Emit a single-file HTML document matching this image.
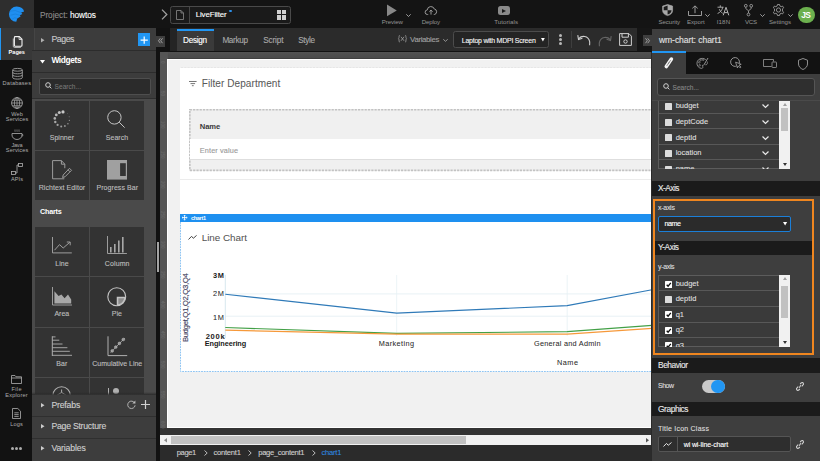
<!DOCTYPE html>
<html><head><meta charset="utf-8">
<style>
*{box-sizing:border-box;margin:0;padding:0}
html,body{width:820px;height:461px;overflow:hidden;background:#141414;font-family:"Liberation Sans",sans-serif;position:relative}
.a{position:absolute}
.t{position:absolute;white-space:nowrap;line-height:1;-webkit-text-stroke:0.12px currentColor}
svg{position:absolute;overflow:visible}
</style></head><body>
<div class="a" style="left:0px;top:0px;width:820px;height:28.8px;background:#141414;"></div>
<div class="a" style="left:0px;top:0px;width:33.5px;height:28.4px;background:#2e2e2e;"></div>
<svg style="left:0px;top:0px" width="33" height="28" viewBox="0 0 33 28">
<path d="M16.8 6.6A7.6 7.6 0 0 0 16.3 21.8L17.2 18.5 20.6 16.6 19.9 15.3 22.4 14 21.1 12.6 24.1 11.5Q23.2 7 16.8 6.6Z" fill="#1f8ff0"/>
<path d="M10.0 11.2Q15 9.2 21.1 12.6M10.6 15.2Q15.2 12.8 19.9 15.3M12.2 19Q15 16.6 17.2 18.5" stroke="#1476cc" stroke-width="0.8" fill="none" opacity="0.6"/></svg>
<div class="t" style="left:39.90px;top:10.60px;font-size:8.3px;color:#8c8c8c;letter-spacing:-0.046px;">Project: <span style="color:#fff">howtos</span></div>
<svg style="left:161px;top:9px" width="7" height="11" viewBox="0 0 7 11"><path d="M1 0.6L5.8 5.5 1 10.4" stroke="#a0a0a0" stroke-width="1.3" fill="none"/></svg>
<div class="a" style="left:170.1px;top:6px;width:120.7px;height:17.8px;background:#1a1a1a;border:1px solid #4a4a4a;border-radius:2.5px"></div>
<div class="a" style="left:189.3px;top:6.5px;width:0.9px;height:16.8px;background:#474747;"></div>
<svg style="left:175.5px;top:10.3px" width="8" height="10" viewBox="0 0 8 10"><path d="M0.5 0.5H5L7.5 3V9.5H0.5Z M5 0.5V3H7.5" stroke="#8c8c8c" stroke-width="0.8" fill="none"/></svg>
<div class="t" style="left:195.70px;top:11.40px;font-size:7.9px;color:#fff;letter-spacing:-0.105px;">LiveFilter</div>
<div class="a" style="left:229.2px;top:9.8px;width:2.4px;height:2.4px;background:#2d8fe8;border-radius:50%"></div>
<div class="a" style="left:276.6px;top:10px;width:4.4px;height:4.4px;background:#cfcfcf;"></div>
<div class="a" style="left:281.8px;top:10px;width:4.4px;height:4.4px;background:#cfcfcf;"></div>
<div class="a" style="left:276.6px;top:15.2px;width:4.4px;height:4.4px;background:#cfcfcf;"></div>
<div class="a" style="left:281.8px;top:15.2px;width:4.4px;height:4.4px;background:#cfcfcf;"></div>
<svg style="left:386.6px;top:4.3px" width="9.8" height="12.4" viewBox="0 0 9.8 12.4"><path d="M0 0.6L9.8 6.5 0 12.2Z" fill="#888"/></svg>
<div class="t" style="left:381.70px;top:18.80px;font-size:6.1px;color:#949494;-webkit-text-stroke:0;letter-spacing:-0.066px;">Preview</div>
<svg style="left:406px;top:14.2px" width="5" height="3" viewBox="0 0 5 3"><path d="M0.3 0.3L2.5 2.5 4.7 0.3" stroke="#bdbdbd" stroke-width="0.8" fill="none"/></svg>
<svg style="left:425px;top:5px" width="12" height="10" viewBox="0 0 12 10"><path d="M3.2 9.5H2.6A2.3 2.3 0 0 1 2.3 4.9 3.6 3.6 0 0 1 9.3 4 2.8 2.8 0 0 1 9.4 9.5H8.8M6 9.6V5.2M4.4 6.7L6 5.1 7.6 6.7" stroke="#a8a8a8" stroke-width="0.9" fill="none"/></svg>
<div class="t" style="left:421.70px;top:18.80px;font-size:6.1px;color:#949494;-webkit-text-stroke:0;letter-spacing:-0.138px;">Deploy</div>
<div class="a" style="left:497.5px;top:6px;width:12.5px;height:9px;background:#8a8a8a;border-radius:2.5px"></div>
<svg style="left:502px;top:8.5px" width="4" height="4" viewBox="0 0 4 4"><path d="M0 0L4 2 0 4Z" fill="#1a1a1a"/></svg>
<div class="t" style="left:494.20px;top:18.80px;font-size:6.1px;color:#949494;-webkit-text-stroke:0;letter-spacing:0.079px;">Tutorials</div>
<svg style="left:662.3px;top:4.4px" width="11.2" height="12" viewBox="0 0 11.2 12"><path d="M5.6 0.5L10.6 2.1V6.5C10.6 9.1 8.4 10.9 5.6 11.6 2.8 10.9 0.6 9.1 0.6 6.5V2.1Z" fill="#a8a8a8" stroke="#b0b0b0" stroke-width="0.6"/><path d="M5.6 1.6V6.2H1.7V2.9Z M5.6 6.2H9.5V6.6C9.4 8.6 7.8 10 5.6 10.6Z" fill="#1c1c1c"/></svg>
<div class="t" style="left:658.40px;top:18.80px;font-size:6.1px;color:#949494;-webkit-text-stroke:0;letter-spacing:-0.034px;">Security</div>
<svg style="left:688px;top:5px" width="14" height="11" viewBox="0 0 14 11"><path d="M0.5 6V10.5H13.5V6M7 8.2V0.9M4.3 3.4L7 0.9 9.7 3.4" stroke="#a8a8a8" stroke-width="0.9" fill="none"/></svg>
<div class="t" style="left:687.00px;top:18.80px;font-size:6.1px;color:#949494;-webkit-text-stroke:0;">Export</div>
<svg style="left:705px;top:14.2px" width="5" height="3" viewBox="0 0 5 3"><path d="M0.3 0.3L2.5 2.5 4.7 0.3" stroke="#bdbdbd" stroke-width="0.8" fill="none"/></svg>
<svg style="left:717px;top:5px" width="13" height="10.5" viewBox="0 0 13 10.5"><path d="M0.5 2.2H6.5M3.3 0.3V2.2M5.8 2.2C5 5.5 3 7.5 0.6 8.5M2.3 4.2C3 6 4.3 7.5 5.6 8.3" stroke="#b4b4b4" stroke-width="0.9" fill="none"/><path d="M6.2 10.3L9 2.3 11.8 10.3M7.2 7.6H10.8" stroke="#b4b4b4" stroke-width="1" fill="none"/></svg>
<div class="t" style="left:716.70px;top:18.80px;font-size:6.1px;color:#949494;-webkit-text-stroke:0;letter-spacing:0.172px;">I18N</div>
<svg style="left:744.2px;top:4px" width="9" height="12.5" viewBox="0 0 9 12.5"><circle cx="1.8" cy="1.8" r="1.4" stroke="#aaa" stroke-width="0.8" fill="none"/><circle cx="7.2" cy="1.8" r="1.4" stroke="#aaa" stroke-width="0.8" fill="none"/><circle cx="4.5" cy="10.5" r="1.4" stroke="#aaa" stroke-width="0.8" fill="none"/><path d="M1.8 3.2V4.6L4.5 6.8V9.1M7.2 3.2V4.6L4.5 6.8" stroke="#aaa" stroke-width="0.8" fill="none"/></svg>
<div class="t" style="left:745.00px;top:18.80px;font-size:6.1px;color:#949494;-webkit-text-stroke:0;letter-spacing:-0.272px;">VCS</div>
<svg style="left:760px;top:14.2px" width="5" height="3" viewBox="0 0 5 3"><path d="M0.3 0.3L2.5 2.5 4.7 0.3" stroke="#bdbdbd" stroke-width="0.8" fill="none"/></svg>
<svg style="left:772.3px;top:4px" width="13" height="12" viewBox="0 0 13 12"><circle cx="6.5" cy="6" r="2.1" stroke="#aaa" stroke-width="0.8" fill="none"/><path d="M5.5 0.5H7.5L7.9 2 9.2 2.7 10.6 2.1 11.6 3.8 10.5 4.9V7.1L11.6 8.2 10.6 9.9 9.2 9.3 7.9 10 7.5 11.5H5.5L5.1 10 3.8 9.3 2.4 9.9 1.4 8.2 2.5 7.1V4.9L1.4 3.8 2.4 2.1 3.8 2.7 5.1 2Z" stroke="#aaa" stroke-width="0.8" fill="none"/></svg>
<div class="t" style="left:769.00px;top:18.80px;font-size:6.1px;color:#949494;-webkit-text-stroke:0;">Settings</div>
<svg style="left:788.3px;top:14.2px" width="5" height="3" viewBox="0 0 5 3"><path d="M0.3 0.3L2.5 2.5 4.7 0.3" stroke="#bdbdbd" stroke-width="0.8" fill="none"/></svg>
<div class="a" style="left:798.1px;top:6.9px;width:16.6px;height:16.6px;background:#6cb04e;border-radius:50%"></div>
<div class="t" style="left:801.30px;top:11.10px;font-size:8.4px;color:#fff;font-weight:bold;-webkit-text-stroke:0;letter-spacing:-0.675px;">JS</div>
<div class="a" style="left:32px;top:28.4px;width:124px;height:433px;background:#3c3c3c;"></div>
<div class="a" style="left:32px;top:99.4px;width:124px;height:296px;background:#4a4a4a;"></div>
<div class="a" style="left:0px;top:28.4px;width:32px;height:433px;background:#121212;"></div>
<div class="a" style="left:0px;top:28.4px;width:33.6px;height:31.9px;background:#383838;"></div>
<div class="a" style="left:33.6px;top:28.4px;width:0.8px;height:31.9px;background:#454545;"></div>
<div class="a" style="left:0px;top:28.4px;width:1.3px;height:31.9px;background:#2196f3;"></div>
<svg style="left:11.5px;top:36px" width="11" height="12" viewBox="0 0 11 12"><path d="M1.3 2.5V10.3C1.3 11 1.8 11.4 2.5 11.4H8.8" stroke="#cfcfcf" stroke-width="0.9" fill="none"/><path d="M3.2 0.6H7.3L10 3.3V9.2C10 9.8 9.6 10.2 9 10.2H3.2C2.6 10.2 2.4 9.8 2.4 9.2V1.4C2.4 0.9 2.7 0.6 3.2 0.6Z" stroke="#f0f0f0" stroke-width="1.1" fill="none"/><path d="M7.1 0.8V3.5H9.8" stroke="#f0f0f0" stroke-width="0.8" fill="none"/></svg>
<div class="t" style="left:8.60px;top:50.30px;font-size:5.6px;color:#fff;font-weight:bold;-webkit-text-stroke:0;letter-spacing:-0.025px;">Pages</div>
<svg style="left:12px;top:67.8px" width="11" height="11.5" viewBox="0 0 11 11.5"><ellipse cx="5.5" cy="1.8" rx="4.8" ry="1.4" stroke="#b0b0b0" stroke-width="0.8" fill="none"/><path d="M0.7 1.8V9.7C0.7 10.5 3 11.1 5.5 11.1 8 11.1 10.3 10.5 10.3 9.7V1.8M0.7 4.4C0.7 5.2 3 5.8 5.5 5.8 8 5.8 10.3 5.2 10.3 4.4M0.7 7C0.7 7.8 3 8.4 5.5 8.4 8 8.4 10.3 7.8 10.3 7" stroke="#b0b0b0" stroke-width="0.8" fill="none"/></svg>
<div class="t" style="left:2.60px;top:81.20px;font-size:5.6px;color:#acacac;-webkit-text-stroke:0;letter-spacing:0.203px;">Databases</div>
<svg style="left:11px;top:97px" width="12" height="12" viewBox="0 0 12 12"><circle cx="6" cy="6" r="5.4" stroke="#b0b0b0" stroke-width="0.8" fill="none"/><ellipse cx="6" cy="6" rx="2.6" ry="5.4" stroke="#b0b0b0" stroke-width="0.7" fill="none"/><path d="M0.6 6H11.4M1.4 3.2H10.6M1.4 8.8H10.6M6 0.6V11.4" stroke="#b0b0b0" stroke-width="0.7" fill="none"/></svg>
<div class="t" style="left:11.25px;top:111.80px;font-size:5.6px;color:#acacac;-webkit-text-stroke:0;letter-spacing:0.043px;">Web</div>
<div class="t" style="left:5.75px;top:117.20px;font-size:5.6px;color:#acacac;-webkit-text-stroke:0;letter-spacing:0.147px;">Services</div>
<svg style="left:10.5px;top:128.8px" width="12" height="11" viewBox="0 0 12 11"><path d="M4 0.5C3.5 1.2 4.5 1.8 4 2.8M6 0.5C5.5 1.2 6.5 1.8 6 2.8M8 0.5C7.5 1.2 8.5 1.8 8 2.8" stroke="#b0b0b0" stroke-width="0.6" fill="none"/><path d="M1 4.5H11V6C11 8.5 8.8 10.5 6 10.5 3.2 10.5 1 8.5 1 6Z" stroke="#b0b0b0" stroke-width="0.8" fill="none"/><path d="M11 5.5H11.8V7H10.8" stroke="#b0b0b0" stroke-width="0.6" fill="none"/></svg>
<div class="t" style="left:11.50px;top:142.80px;font-size:5.6px;color:#acacac;-webkit-text-stroke:0;letter-spacing:-0.276px;">Java</div>
<div class="t" style="left:5.75px;top:148.40px;font-size:5.6px;color:#acacac;-webkit-text-stroke:0;letter-spacing:0.147px;">Services</div>
<svg style="left:11px;top:163px" width="12" height="12" viewBox="0 0 12 12"><rect x="7.5" y="0.5" width="4" height="3" stroke="#b0b0b0" stroke-width="0.8" fill="none"/><rect x="0.5" y="8.5" width="4" height="3" stroke="#b0b0b0" stroke-width="0.8" fill="none"/><path d="M4.5 10H6V2H7.5" stroke="#b0b0b0" stroke-width="0.8" fill="none"/></svg>
<div class="t" style="left:11.00px;top:177.30px;font-size:5.6px;color:#acacac;-webkit-text-stroke:0;letter-spacing:0.058px;">APIs</div>
<svg style="left:11px;top:375px" width="11" height="9" viewBox="0 0 11 9"><path d="M0.5 0.5H4L5 1.8H10.5V8.5H0.5Z M0.5 3H10.5" stroke="#b0b0b0" stroke-width="0.8" fill="none"/></svg>
<div class="t" style="left:11.50px;top:386.50px;font-size:5.6px;color:#acacac;-webkit-text-stroke:0;letter-spacing:0.325px;">File</div>
<div class="t" style="left:5.25px;top:392.50px;font-size:5.6px;color:#acacac;-webkit-text-stroke:0;letter-spacing:0.235px;">Explorer</div>
<svg style="left:12px;top:407.5px" width="9" height="11" viewBox="0 0 9 11"><path d="M0.5 0.5H5.8L8.5 3.2V10.5H0.5Z M2.3 4.8H6.7M2.3 6.6H6.7M2.3 8.4H6.7" stroke="#b0b0b0" stroke-width="0.8" fill="none"/></svg>
<div class="t" style="left:10.25px;top:421.50px;font-size:5.6px;color:#acacac;-webkit-text-stroke:0;letter-spacing:0.119px;">Logs</div>
<div class="a" style="left:11px;top:446.5px;width:3px;height:3px;background:#acacac;border-radius:50%"></div>
<div class="a" style="left:15.2px;top:446.5px;width:3px;height:3px;background:#acacac;border-radius:50%"></div>
<div class="a" style="left:19.4px;top:446.5px;width:3px;height:3px;background:#acacac;border-radius:50%"></div>
<div class="a" style="left:32px;top:50.0px;width:124px;height:1.0px;background:#2c2c2c;"></div>
<svg style="left:41px;top:37.5px" width="3.5" height="4.5" viewBox="0 0 3.5 4.5"><path d="M0 0L3.5 2.25 0 4.5Z" fill="#b0b0b0"/></svg>
<div class="t" style="left:51.40px;top:34.70px;font-size:8.8px;color:#c8c8c8;letter-spacing:-0.463px;">Pages</div>
<div class="a" style="left:137.5px;top:33.4px;width:12.6px;height:12.6px;background:#2196f3;"></div>
<svg style="left:139.6px;top:35.5px" width="8.4" height="8.4" viewBox="0 0 8.4 8.4"><path d="M4.2 0.6V7.8M0.6 4.2H7.8" stroke="#fff" stroke-width="1.2"/></svg>
<div class="a" style="left:32px;top:51px;width:124px;height:21.6px;background:#3c3c3c;"></div>
<div class="a" style="left:32px;top:72.4px;width:124px;height:1.0px;background:#2c2c2c;"></div>
<svg style="left:40px;top:59.5px" width="5" height="3.6" viewBox="0 0 5 3.6"><path d="M0 0H5L2.5 3.6Z" fill="#fff"/></svg>
<div class="t" style="left:51.40px;top:55.60px;font-size:8.4px;color:#fff;font-weight:bold;-webkit-text-stroke:0;letter-spacing:-0.365px;">Widgets</div>
<div class="a" style="left:32px;top:73.4px;width:124px;height:25.2px;background:#3c3c3c;"></div>
<div class="a" style="left:32px;top:98.4px;width:124px;height:1.0px;background:#2e2e2e;"></div>
<div class="a" style="left:39px;top:77.8px;width:112px;height:16.9px;background:#2b2b2b;border:1px solid #4e4e4e;border-radius:2px"></div>
<svg style="left:44.5px;top:82.3px" width="7" height="7" viewBox="0 0 7 7"><circle cx="3" cy="3" r="2.3" stroke="#d0d0d0" stroke-width="1" fill="none"/><path d="M4.7 4.7L6.4 6.4" stroke="#d0d0d0" stroke-width="1"/></svg>
<div class="t" style="left:54.60px;top:83.80px;font-size:6.6px;color:#7a7a7a;-webkit-text-stroke:0.05px currentColor;">Search...</div>
<div class="a" style="left:34.8px;top:100.9px;width:54.4px;height:48.900000000000006px;background:#333;"></div>
<div class="a" style="left:90.0px;top:100.9px;width:53.9px;height:48.900000000000006px;background:#333;"></div>
<div class="a" style="left:34.8px;top:150.6px;width:54.4px;height:49.099999999999994px;background:#333;"></div>
<div class="a" style="left:90.0px;top:150.6px;width:53.9px;height:49.099999999999994px;background:#333;"></div>
<div class="a" style="left:34.8px;top:226.8px;width:54.4px;height:49.30000000000001px;background:#333;"></div>
<div class="a" style="left:90.0px;top:226.8px;width:53.9px;height:49.30000000000001px;background:#333;"></div>
<div class="a" style="left:34.8px;top:276.9px;width:54.4px;height:49.900000000000034px;background:#333;"></div>
<div class="a" style="left:90.0px;top:276.9px;width:53.9px;height:49.900000000000034px;background:#333;"></div>
<div class="a" style="left:34.8px;top:327.6px;width:54.4px;height:49.599999999999966px;background:#333;"></div>
<div class="a" style="left:90.0px;top:327.6px;width:53.9px;height:49.599999999999966px;background:#333;"></div>
<div class="a" style="left:34.8px;top:378px;width:54.4px;height:16px;background:#333;"></div>
<div class="a" style="left:90.0px;top:378px;width:53.9px;height:16px;background:#333;"></div>
<div class="t" style="left:40.10px;top:208.20px;font-size:7.2px;color:#fff;font-weight:bold;-webkit-text-stroke:0;letter-spacing:-0.221px;">Charts</div>
<svg style="left:53px;top:109.5px" width="19" height="19" viewBox="0 0 19 19"><circle cx="10" cy="1.9" r="1.6" fill="#c8c8c8"/><circle cx="6.3" cy="2.5" r="1.5" fill="#c0c0c0"/><circle cx="3.3" cy="4.9" r="1.4" fill="#b8b8b8"/><circle cx="1.8" cy="8.4" r="1.3" fill="#b0b0b0"/><circle cx="2.3" cy="12" r="1.2" fill="#a8a8a8"/><circle cx="4.6" cy="14.9" r="1.1" fill="#a2a2a2"/><circle cx="8.2" cy="16.4" r="1" fill="#9c9c9c"/><circle cx="11.9" cy="16" r="0.9" fill="#969696"/><circle cx="14.9" cy="13.8" r="0.8" fill="#909090"/><circle cx="16.4" cy="10.4" r="0.65" fill="#8a8a8a"/><circle cx="16.2" cy="6.7" r="0.5" fill="#848484"/><circle cx="14.5" cy="3.7" r="0.4" fill="#7e7e7e"/></svg>
<div class="t" style="left:49.70px;top:133.90px;font-size:7px;color:#bdbdbd;letter-spacing:0.029px;">Spinner</div>
<svg style="left:107px;top:109.8px" width="20" height="20" viewBox="0 0 20 20"><circle cx="7.4" cy="7.4" r="6.7" stroke="#c4c4c4" stroke-width="1" fill="none"/><path d="M12.2 12.2L17.6 17.6" stroke="#c4c4c4" stroke-width="1"/></svg>
<div class="t" style="left:105.70px;top:133.90px;font-size:7px;color:#bdbdbd;letter-spacing:0.064px;">Search</div>
<svg style="left:51.7px;top:160.3px" width="21" height="20" viewBox="0 0 21 20"><path d="M12.3 18.8H0.6V0.6H9.4L12.8 4.2V8.2M9.4 0.6V4.2H12.8" stroke="#a8a8a8" stroke-width="0.9" fill="none"/><path d="M17.5 8.3L19.5 10.3 13 16.8 10.6 17.5 11.2 15Z M16 9.8L18 11.8" stroke="#a8a8a8" stroke-width="0.9" fill="none"/></svg>
<div class="t" style="left:38.70px;top:183.90px;font-size:7px;color:#bdbdbd;letter-spacing:0.070px;">Richtext Editor</div>
<svg style="left:107.1px;top:160px" width="20" height="19.6" viewBox="0 0 20 19.6"><rect x="0" y="0" width="20" height="19.6" fill="#a0a0a0"/><rect x="13.1" y="3.2" width="5.7" height="12.8" fill="#333"/></svg>
<div class="t" style="left:96.50px;top:183.90px;font-size:7px;color:#bdbdbd;letter-spacing:0.059px;">Progress Bar</div>
<svg style="left:51.5px;top:237px" width="20" height="16.5" viewBox="0 0 20 16.5"><path d="M0.5 0V15.9H19.8" stroke="#a8a8a8" stroke-width="0.9" fill="none"/><path d="M2.5 13.2L7.5 7.6 11.2 11 17.8 5.3M14.8 5H18.2V8.3" stroke="#a8a8a8" stroke-width="0.9" fill="none"/></svg>
<div class="t" style="left:55.20px;top:260.10px;font-size:7px;color:#bdbdbd;letter-spacing:0.088px;">Line</div>
<svg style="left:107px;top:236px" width="20" height="18" viewBox="0 0 20 18"><path d="M0.5 0V17.5H19.9" stroke="#a8a8a8" stroke-width="0.9" fill="none"/><path d="M3.8 16.5V11M7.8 16.5V8M11.8 16.5V4.5M15.8 16.5V1" stroke="#a8a8a8" stroke-width="1.6"/></svg>
<div class="t" style="left:104.80px;top:260.10px;font-size:7px;color:#bdbdbd;letter-spacing:0.116px;">Column</div>
<svg style="left:51.7px;top:287px" width="20" height="18.5" viewBox="0 0 20 18.5"><path d="M0.5 0V18H20" stroke="#a8a8a8" stroke-width="0.9" fill="none"/><path d="M2.4 16.5V4.2L6.6 9 9.4 7.4 12.6 11.2 16 7.4 19.2 12.5V16.5Z" fill="#a8a8a8"/></svg>
<div class="t" style="left:54.40px;top:310.00px;font-size:7px;color:#bdbdbd;">Area</div>
<svg style="left:107.2px;top:286.8px" width="19.5" height="19.5" viewBox="0 0 19.5 19.5"><path d="M18.7 9.75A8.95 8.95 0 1 1 9.75 0.8 8.95 8.95 0 0 1 18.7 9.75Z" stroke="#c4c4c4" stroke-width="1.1" fill="none"/><path d="M9.75 9.75V18.7A8.95 8.95 0 0 0 18.7 9.75Z" fill="#c4c4c4"/><path d="M11.3 11.3H17.2A7.4 7.4 0 0 1 11.3 17.2Z" fill="#8c8c8c"/></svg>
<div class="t" style="left:111.70px;top:310.00px;font-size:7px;color:#bdbdbd;letter-spacing:0.041px;">Pie</div>
<svg style="left:0px;top:0px" width="160" height="461" viewBox="0 0 160 461"><path d="M52.3 336.3V356" stroke="#b0b0b0" stroke-width="1" fill="none"/><path d="M52.3 336.9H55.5M52.3 340.2H59.3M52.3 344H62.5M52.3 347.7H67.4M52.3 351.3H69.8M52.3 355.3H72" stroke="#b0b0b0" stroke-width="0.9"/></svg>
<div class="t" style="left:56.30px;top:360.00px;font-size:7px;color:#bdbdbd;letter-spacing:0.053px;">Bar</div>
<svg style="left:0px;top:0px" width="160" height="461" viewBox="0 0 160 461"><path d="M108 336.3V355.6H127.2" stroke="#b0b0b0" stroke-width="1" fill="none"/><path d="M110.6 352.6L124.8 338" stroke="#a0a0a0" stroke-width="0.9"/><circle cx="112.2" cy="350.9" r="1.35" fill="#9a9a9a" stroke="#c4c4c4" stroke-width="0.5"/><circle cx="115.8" cy="347.1" r="1.35" fill="#9a9a9a" stroke="#c4c4c4" stroke-width="0.5"/><circle cx="119.4" cy="343.4" r="1.35" fill="#9a9a9a" stroke="#c4c4c4" stroke-width="0.5"/><circle cx="123.3" cy="339.5" r="1.35" fill="#9a9a9a" stroke="#c4c4c4" stroke-width="0.5"/></svg>
<div class="t" style="left:92.30px;top:360.00px;font-size:7px;color:#bdbdbd;letter-spacing:-0.021px;">Cumulative Line</div>
<svg style="left:0px;top:0px" width="160" height="461" viewBox="0 0 160 461"><path d="M52.8 395.5A8.8 8.8 0 0 1 70.4 395.5" stroke="#b0b0b0" stroke-width="1.1" fill="none"/><path d="M61.6 389.5V392.5M61.6 392.5L56.5 395.5M61.6 392.5L66.7 395.5" stroke="#b0b0b0" stroke-width="1" fill="none"/></svg>
<div class="a" style="left:107.9px;top:388.0px;width:1.0px;height:6.5px;background:#b0b0b0;"></div>
<div class="a" style="left:112.6px;top:387.6px;width:6.8px;height:6.8px;background:#b0b0b0;border-radius:50%"></div>
<div class="a" style="left:32px;top:391.5px;width:124px;height:3.7px;background:linear-gradient(rgba(40,40,40,0),rgba(40,40,40,0.9));"></div>
<div class="a" style="left:32px;top:395.2px;width:124px;height:66px;background:#3d3d3d;"></div>
<div class="a" style="left:32px;top:416.0px;width:124px;height:0.9px;background:#2f2f2f;"></div>
<div class="a" style="left:32px;top:438.0px;width:124px;height:0.9px;background:#2f2f2f;"></div>
<svg style="left:41.2px;top:403.2px" width="3.5" height="4.5" viewBox="0 0 3.5 4.5"><path d="M0 0L3.5 2.25 0 4.5Z" fill="#ccc"/></svg>
<div class="t" style="left:51.40px;top:400.70px;font-size:8.7px;color:#cfcfcf;letter-spacing:-0.181px;">Prefabs</div>
<svg style="left:127px;top:400.2px" width="9" height="9" viewBox="0 0 9 9"><path d="M7.7 3.1A3.7 3.7 0 1 0 8.1 5.3" stroke="#bdbdbd" stroke-width="0.9" fill="none"/><path d="M8.4 0.5V3.6H5.3Z" fill="#bdbdbd"/></svg>
<svg style="left:141.2px;top:400.2px" width="9" height="9" viewBox="0 0 9 9"><path d="M4.5 0V9M0 4.5H9" stroke="#d0d0d0" stroke-width="1.2"/></svg>
<svg style="left:41.2px;top:424.4px" width="3.5" height="4.5" viewBox="0 0 3.5 4.5"><path d="M0 0L3.5 2.25 0 4.5Z" fill="#ccc"/></svg>
<div class="t" style="left:51.40px;top:422.20px;font-size:8.7px;color:#cfcfcf;letter-spacing:-0.241px;">Page Structure</div>
<svg style="left:41.2px;top:445.8px" width="3.5" height="4.5" viewBox="0 0 3.5 4.5"><path d="M0 0L3.5 2.25 0 4.5Z" fill="#ccc"/></svg>
<div class="t" style="left:51.40px;top:443.60px;font-size:8.7px;color:#cfcfcf;letter-spacing:-0.153px;">Variables</div>
<div class="a" style="left:156px;top:28.4px;width:496px;height:433px;background:#121212;"></div>
<div class="a" style="left:155.9px;top:35.5px;width:9px;height:11.1px;background:#3e3e3e;"></div>
<svg style="left:158px;top:38.2px" width="5" height="5.5" viewBox="0 0 5 5.5"><path d="M2.3 0.3L0.5 2.75 2.3 5.2M4.5 0.3L2.7 2.75 4.5 5.2" stroke="#b8b8b8" stroke-width="0.8" fill="none"/></svg>
<div class="a" style="left:170px;top:28.4px;width:6.5px;height:22.4px;background:#242424;"></div>
<div class="a" style="left:176.5px;top:28.4px;width:460.7px;height:22.4px;background:#2b2b2b;"></div>
<div class="a" style="left:176.8px;top:28.6px;width:36.8px;height:22.2px;background:#3a3a3a;"></div>
<div class="a" style="left:176.8px;top:28.7px;width:36.8px;height:2.0px;background:#2196f3;"></div>
<div class="t" style="left:183.10px;top:36.90px;font-size:8.2px;color:#fff;letter-spacing:-0.305px;">Design</div>
<div class="t" style="left:222.40px;top:36.90px;font-size:8.2px;color:#a8a8a8;letter-spacing:-0.349px;">Markup</div>
<div class="t" style="left:263.20px;top:36.90px;font-size:8.2px;color:#a8a8a8;letter-spacing:-0.132px;">Script</div>
<div class="t" style="left:298.20px;top:36.90px;font-size:8.2px;color:#a8a8a8;letter-spacing:-0.358px;">Style</div>
<svg style="left:398.4px;top:35.3px" width="9" height="7.5" viewBox="0 0 9 7.5"><path d="M1.8 0.3C0.8 0.3 1.2 2.5 0.9 3.2 0.7 3.6 0.3 3.75 0.3 3.75 0.3 3.75 0.7 3.9 0.9 4.3 1.2 5 0.8 7.2 1.8 7.2M7.2 0.3C8.2 0.3 7.8 2.5 8.1 3.2 8.3 3.6 8.7 3.75 8.7 3.75 8.7 3.75 8.3 3.9 8.1 4.3 7.8 5 8.2 7.2 7.2 7.2M3 1.8L6 5.8M6 1.8L3 5.8" stroke="#a0a0a0" stroke-width="0.8" fill="none"/></svg>
<div class="t" style="left:410.10px;top:35.90px;font-size:7.8px;color:#a0a0a0;letter-spacing:-0.330px;">Variables</div>
<svg style="left:442.8px;top:38.6px" width="5" height="2.8" viewBox="0 0 5 2.8"><path d="M0.3 0.3L2.5 2.3 4.7 0.3" stroke="#b0b0b0" stroke-width="0.8" fill="none"/></svg>
<div class="a" style="left:452.6px;top:31.2px;width:96.1px;height:17.3px;background:#242424;border:1px solid #4c4c4c;border-radius:2.5px"></div>
<div class="t" style="left:461.80px;top:36.60px;font-size:7.0px;color:#f4f4f4;letter-spacing:-0.244px;">Laptop with MDPI Screen</div>
<svg style="left:541px;top:38.4px" width="3.8" height="3.4" viewBox="0 0 3.8 3.4"><path d="M0 0H3.8L1.9 3.4Z" fill="#fff"/></svg>
<div class="a" style="left:558.6px;top:33.9px;width:3.1px;height:3.1px;background:#b8b8b8;border-radius:50%"></div>
<div class="a" style="left:558.6px;top:38.0px;width:3.1px;height:3.1px;background:#b8b8b8;border-radius:50%"></div>
<div class="a" style="left:558.6px;top:42.1px;width:3.1px;height:3.1px;background:#b8b8b8;border-radius:50%"></div>
<div class="a" style="left:571.2px;top:31px;width:0.9px;height:17.3px;background:#3e3e3e;"></div>
<svg style="left:577px;top:34.0px" width="14" height="12" viewBox="0 0 14 12"><path d="M1.8 4.6C4.5 1.4 11.2 1.2 12.6 7.4 12.9 8.8 12.6 10.3 12.6 11.3" stroke="#cfcfcf" stroke-width="1.1" fill="none"/><path d="M0.8 1.2L1.5 5.6 5.4 4.3" stroke="#cfcfcf" stroke-width="1.1" fill="none"/></svg>
<svg style="left:597.5px;top:34.5px" width="14" height="12" viewBox="0 0 14 12"><path d="M12.2 4.6C9.5 1.4 2.8 1.2 1.4 7.4 1.1 8.8 1.4 10.3 1.4 11.3" stroke="#666" stroke-width="1.1" fill="none"/><path d="M13.2 1.2L12.5 5.6 8.6 4.3" stroke="#666" stroke-width="1.1" fill="none"/></svg>
<svg style="left:619.3px;top:33.3px" width="13" height="13" viewBox="0 0 13 13"><path d="M0.6 0.6H9.9L12.4 3.1V12.4H0.6Z" stroke="#cfcfcf" stroke-width="1" fill="none"/><path d="M3 0.6V4.2H9.4V0.6" stroke="#cfcfcf" stroke-width="1" fill="none"/><circle cx="6.5" cy="8.5" r="1.7" stroke="#cfcfcf" stroke-width="1" fill="none"/></svg>
<div class="a" style="left:637.2px;top:28.4px;width:14.8px;height:22.4px;background:#161616;"></div>
<div class="a" style="left:643px;top:35.3px;width:9px;height:10.4px;background:#3e3e3e;"></div>
<svg style="left:645.3px;top:37.5px" width="5" height="5.5" viewBox="0 0 5 5.5"><path d="M0.5 0.3L2.3 2.75 0.5 5.2M2.7 0.3L4.5 2.75 2.7 5.2" stroke="#b8b8b8" stroke-width="0.8" fill="none"/></svg>
<div class="a" style="left:156px;top:50.6px;width:496px;height:1.4px;background:#121212;"></div>
<div class="a" style="left:156.9px;top:241.8px;width:2.3px;height:30.2px;background:#a4a4a4;"></div>
<div class="a" style="left:160px;top:52.0px;width:491.4px;height:375.7px;background:#555555;"></div>
<div class="a" style="left:167.5px;top:52.0px;width:484px;height:6.4px;background:linear-gradient(#525252,#4a4a4a);"></div>
<div class="a" style="left:167.5px;top:57.8px;width:484px;height:1.0px;background:#404040;"></div>
<div class="a" style="left:166.6px;top:59.8px;width:0.9px;height:367.9px;background:#444;"></div>
<div class="a" style="left:167.3px;top:58.9px;width:484.1px;height:368.8px;background:#f1f1f1;border-left:1.1px solid #fff;border-top:1.3px solid #fff;border-bottom:0.9px solid #fff"></div>
<div class="a" style="left:160px;top:427.7px;width:491.4px;height:7.3px;background:#333333;"></div>
<div class="t" style="left:164.2px;top:60.8px;font-size:4.5px;color:#6a6a6a;transform-origin:0 0;transform:rotate(90deg)">0</div><div class="t" style="left:164.2px;top:90.8px;font-size:4.5px;color:#6a6a6a;transform-origin:0 0;transform:rotate(90deg)">50</div><div class="t" style="left:164.2px;top:120.8px;font-size:4.5px;color:#6a6a6a;transform-origin:0 0;transform:rotate(90deg)">100</div><div class="t" style="left:164.2px;top:150.8px;font-size:4.5px;color:#6a6a6a;transform-origin:0 0;transform:rotate(90deg)">150</div><div class="t" style="left:164.2px;top:180.8px;font-size:4.5px;color:#6a6a6a;transform-origin:0 0;transform:rotate(90deg)">200</div><div class="t" style="left:164.2px;top:210.8px;font-size:4.5px;color:#6a6a6a;transform-origin:0 0;transform:rotate(90deg)">250</div><div class="t" style="left:164.2px;top:240.8px;font-size:4.5px;color:#6a6a6a;transform-origin:0 0;transform:rotate(90deg)">300</div><div class="t" style="left:164.2px;top:270.8px;font-size:4.5px;color:#6a6a6a;transform-origin:0 0;transform:rotate(90deg)">350</div><div class="t" style="left:164.2px;top:300.8px;font-size:4.5px;color:#6a6a6a;transform-origin:0 0;transform:rotate(90deg)">400</div><div class="t" style="left:164.2px;top:330.8px;font-size:4.5px;color:#6a6a6a;transform-origin:0 0;transform:rotate(90deg)">450</div><div class="t" style="left:164.2px;top:360.8px;font-size:4.5px;color:#6a6a6a;transform-origin:0 0;transform:rotate(90deg)">500</div><div class="t" style="left:164.2px;top:390.8px;font-size:4.5px;color:#6a6a6a;transform-origin:0 0;transform:rotate(90deg)">550</div><div class="t" style="left:164.2px;top:420.8px;font-size:4.5px;color:#6a6a6a;transform-origin:0 0;transform:rotate(90deg)">600</div>
<div class="a" style="left:179.8px;top:67.6px;width:471.6px;height:304.2px;background:#ffffff;"></div>
<svg style="left:180.5px;top:66.6px" width="471" height="1" viewBox="0 0 471 1"><path d="M0 0.5H471" stroke="#e4e4e4" stroke-width="0.9" stroke-dasharray="2 1.3"/></svg>
<div class="a" style="left:179.8px;top:179.2px;width:471.6px;height:0.8px;background:#ececec;"></div>
<svg style="left:188.8px;top:81px" width="7.6" height="5.2" viewBox="0 0 7.6 5.2"><path d="M0 0.5H7.6M1.5 2.6H6.1M2.9 4.7H4.7" stroke="#666" stroke-width="0.9"/></svg>
<div class="t" style="left:201.70px;top:79.10px;font-size:10.0px;color:#5a5a5a;-webkit-text-stroke:0.05px currentColor;letter-spacing:0.084px;">Filter Department</div>
<div class="a" style="left:188.9px;top:108.9px;width:461.6px;height:62.2px;background:#f0f0f0;"></div>
<svg style="left:188.9px;top:108.9px" width="461.6" height="62.2" viewBox="0 0 461.6 62.2"><path d="M461.6 0.8H0.8V61.4H461.6" stroke="#c2c2c2" stroke-width="1.6" stroke-dasharray="2.2 1.1" fill="none"/></svg>
<div class="t" style="left:199.80px;top:122.90px;font-size:7.6px;color:#3a3a3a;font-weight:bold;-webkit-text-stroke:0;letter-spacing:-0.100px;">Name</div>
<div class="a" style="left:190.2px;top:138.8px;width:461.2px;height:21.2px;background:#fff;border-bottom:0.8px solid #dedede"></div>
<div class="t" style="left:199.80px;top:146.70px;font-size:7.3px;color:#9a9a9a;letter-spacing:0.127px;">Enter value</div>
<div class="a" style="left:180.0px;top:213.9px;width:471.4px;height:7.8px;background:#1e90f0;"></div>
<svg style="left:182px;top:215.2px" width="5.2" height="5.2" viewBox="0 0 5.2 5.2"><path d="M2.6 0V5.2M0 2.6H5.2" stroke="#fff" stroke-width="0.9"/><path d="M1.8 0.9L2.6 0 3.4 0.9M1.8 4.3L2.6 5.2 3.4 4.3M0.9 1.8L0 2.6 0.9 3.4M4.3 1.8L5.2 2.6 4.3 3.4" stroke="#fff" stroke-width="0.6" fill="none"/></svg>
<div class="t" style="left:190.90px;top:215.80px;font-size:5.5px;color:#fff;font-weight:bold;-webkit-text-stroke:0;letter-spacing:-0.282px;">chart1</div>
<svg style="left:180.0px;top:221.7px" width="471.4" height="150" viewBox="0 0 471.4 150"><path d="M0.5 0V149.5H471.4" stroke="#8ec4f2" stroke-width="1" stroke-dasharray="1.8 0.9" fill="none"/></svg>
<svg style="left:187.8px;top:234.8px" width="9" height="5" viewBox="0 0 9 5"><path d="M0.5 4.5L3.6 1.3 5.3 3.3 8.6 0.4" stroke="#4a4a4a" stroke-width="1" fill="none"/></svg>
<div class="t" style="left:201.70px;top:232.60px;font-size:9.9px;color:#555;-webkit-text-stroke:0.05px currentColor;letter-spacing:-0.031px;">Line Chart</div>
<svg style="left:180px;top:222px" width="472" height="150" viewBox="180 222 472 150">
  <path d="M225.3 293.9H651.4M225.3 316.2H651.4" stroke="#e2eef3" stroke-width="0.8"/>
  <path d="M396.7 275V336M567.2 275V336" stroke="#e6f0f4" stroke-width="0.8"/>
  <path d="M225.3 274.8V338" stroke="#d3e4ec" stroke-width="0.9"/>
  <polyline points="225.3,294.3 396.7,313.1 567.2,305.6 652,289.8" stroke="#2f7ab8" stroke-width="1.15" fill="none"/>
  <polyline points="225.3,327.5 396.7,333.4 567.2,331.6 652,325.4" stroke="#43a047" stroke-width="1.15" fill="none"/>
  <polyline points="225.3,330.2 396.7,334.2 567.2,334.2 652,328.4" stroke="#f6993a" stroke-width="1.2" fill="none"/>
</svg>
<div class="t" style="left:213.00px;top:271.70px;font-size:7.4px;color:#1a1a1a;font-weight:bold;-webkit-text-stroke:0;letter-spacing:0.620px;">3M</div>
<div class="t" style="left:213.00px;top:289.90px;font-size:7.4px;color:#2a2a2a;-webkit-text-stroke:0.05px currentColor;letter-spacing:0.620px;">2M</div>
<div class="t" style="left:213.00px;top:313.70px;font-size:7.4px;color:#2a2a2a;-webkit-text-stroke:0.05px currentColor;letter-spacing:0.620px;">1M</div>
<div class="t" style="left:205.70px;top:332.80px;font-size:7.6px;color:#1a1a1a;font-weight:bold;-webkit-text-stroke:0;letter-spacing:0.697px;">200k</div>
<div class="t" style="left:204.80px;top:340.00px;font-size:7.3px;color:#1a1a1a;font-weight:bold;-webkit-text-stroke:0;letter-spacing:-0.078px;">Engineering</div>
<div class="t" style="left:378.80px;top:340.30px;font-size:7.3px;color:#2a2a2a;-webkit-text-stroke:0.05px currentColor;letter-spacing:0.393px;">Marketing</div>
<div class="t" style="left:534.00px;top:340.30px;font-size:7.3px;color:#2a2a2a;-webkit-text-stroke:0.05px currentColor;letter-spacing:0.250px;">General and Admin</div>
<div class="t" style="left:557.00px;top:359.30px;font-size:7.3px;color:#2a2a2a;-webkit-text-stroke:0.05px currentColor;letter-spacing:0.509px;">Name</div>
<div class="t" style="left:182.00px;top:341.6px;font-size:7.8px;color:#3a3a5a;letter-spacing:-0.367px;transform-origin:0 0;transform:rotate(-90deg)">Budget,Q1,Q2,Q3,Q4</div>
<div class="a" style="left:160.4px;top:435px;width:491px;height:10.4px;background:#f1f1f1;"></div>
<div class="a" style="left:170.7px;top:436.4px;width:295.5px;height:7.6px;background:#c1c1c1;"></div>
<svg style="left:163.6px;top:438px" width="3" height="4.5" viewBox="0 0 3 4.5"><path d="M3 0L0 2.25 3 4.5Z" fill="#8a8a8a"/></svg>
<svg style="left:645.6px;top:438px" width="3" height="4.5" viewBox="0 0 3 4.5"><path d="M0 0L3 2.25 0 4.5Z" fill="#555"/></svg>
<div class="a" style="left:160px;top:445.4px;width:491.4px;height:15.6px;background:#2b2b2b;"></div>
<div class="t" style="left:176.80px;top:449.10px;font-size:7.6px;color:#cdcdcd;letter-spacing:-0.409px;">page1</div>
<svg style="left:203.6px;top:450.2px" width="4" height="6" viewBox="0 0 4 6"><path d="M0.5 0.5L3.2 3 0.5 5.5" stroke="#cdcdcd" stroke-width="0.9" fill="none"/></svg>
<div class="t" style="left:213.50px;top:449.10px;font-size:7.6px;color:#cdcdcd;letter-spacing:-0.251px;">content1</div>
<svg style="left:248px;top:450.2px" width="4" height="6" viewBox="0 0 4 6"><path d="M0.5 0.5L3.2 3 0.5 5.5" stroke="#cdcdcd" stroke-width="0.9" fill="none"/></svg>
<div class="t" style="left:258.30px;top:449.10px;font-size:7.6px;color:#cdcdcd;letter-spacing:-0.341px;">page_content1</div>
<svg style="left:311.5px;top:450.2px" width="4" height="6" viewBox="0 0 4 6"><path d="M0.5 0.5L3.2 3 0.5 5.5" stroke="#cdcdcd" stroke-width="0.9" fill="none"/></svg>
<div class="t" style="left:321.50px;top:449.10px;font-size:7.6px;color:#2e8ee8;-webkit-text-stroke:0.05px currentColor;letter-spacing:-0.225px;">chart1</div>
<div class="a" style="left:651.0px;top:51.5px;width:1.0px;height:410px;background:#2a2a2a;"></div>
<div class="a" style="left:652.0px;top:29.2px;width:168px;height:432px;background:#3e3e3e;"></div>
<div class="a" style="left:652px;top:29.2px;width:168px;height:22.3px;background:#3e3e3e;"></div>
<div class="t" style="left:658.90px;top:36.20px;font-size:8.6px;color:#e0e0e0;letter-spacing:-0.076px;">wm-chart: chart1</div>
<div class="a" style="left:652px;top:51.5px;width:168px;height:22.3px;background:#121212;"></div>
<div class="a" style="left:652px;top:51.2px;width:33.7px;height:22.6px;background:#3e3e3e;"></div>
<div class="a" style="left:652px;top:51.2px;width:33.7px;height:1.8px;background:#2196f3;"></div>
<svg style="left:0px;top:0px" width="820" height="461" viewBox="0 0 820 461"><path d="M666.3 66.6L671.4 59.1" stroke="#f4f4f4" stroke-width="3.6" stroke-linecap="round"/><path d="M667.0 65.5L670.7 60.1" stroke="#3e3e3e" stroke-width="1.0" stroke-dasharray="1.1 0.5"/></svg>
<svg style="left:0px;top:0px" width="820" height="461" viewBox="0 0 820 461"><path d="M702.3 58.4A5 5 0 1 0 701.6 68.4C703 68.4 703.1 67 702.6 66.2 702.1 65.3 702.8 64.5 704 64.6L705.9 64.7C706.9 64.7 707.3 63.9 707.3 63.2 707.3 60.7 705.3 58.4 702.3 58.4Z" stroke="#a4a4a4" stroke-width="0.8" fill="none"/><circle cx="699.3" cy="62.3" r="0.8" stroke="#a4a4a4" stroke-width="0.6" fill="none"/><circle cx="700.6" cy="60" r="0.8" stroke="#a4a4a4" stroke-width="0.6" fill="none"/><circle cx="703.2" cy="59.8" r="0.8" stroke="#a4a4a4" stroke-width="0.6" fill="none"/><circle cx="699.7" cy="65.3" r="0.8" stroke="#a4a4a4" stroke-width="0.6" fill="none"/><path d="M708 58L703.6 65.4" stroke="#121212" stroke-width="2.2"/><path d="M708 58L703.6 65.4" stroke="#a4a4a4" stroke-width="0.9"/></svg>
<svg style="left:0px;top:0px" width="820" height="461" viewBox="0 0 820 461"><path d="M739.3 63A4.4 4.4 0 1 0 735.8 66.3" stroke="#a4a4a4" stroke-width="0.9" fill="none"/><path d="M735.6 62.1L741.2 64.3 739 65.1 741 67.1 740.2 67.9 738.2 65.9 737.4 68Z" stroke="#a4a4a4" stroke-width="0.8" fill="#121212" stroke-linejoin="round"/></svg>
<svg style="left:762.5px;top:59.2px" width="14" height="9" viewBox="0 0 14 9"><path d="M8.5 7.5H0.5V0.5H10.5V2.5" stroke="#9c9c9c" stroke-width="0.8" fill="none"/><rect x="9" y="3" width="4.5" height="5.5" rx="0.6" stroke="#9c9c9c" stroke-width="0.8" fill="none"/></svg>
<svg style="left:798.3px;top:57.5px" width="10" height="12" viewBox="0 0 10 12"><path d="M5 0.5L9.5 2.2V6C9.5 8.5 7.5 10.5 5 11.5 2.5 10.5 0.5 8.5 0.5 6V2.2Z" stroke="#9c9c9c" stroke-width="0.9" fill="none"/></svg>
<div class="a" style="left:657.3px;top:78.2px;width:158.1px;height:17.6px;background:#2f2f2f;border:1px solid #555;border-radius:3px"></div>
<svg style="left:662.8px;top:83.2px" width="7" height="7" viewBox="0 0 7 7"><circle cx="3" cy="3" r="2.3" stroke="#d0d0d0" stroke-width="1" fill="none"/><path d="M4.7 4.7L6.4 6.4" stroke="#d0d0d0" stroke-width="1"/></svg>
<div class="t" style="left:672.50px;top:84.50px;font-size:6.6px;color:#858585;">Search...</div>
<div class="a" style="left:652px;top:99.8px;width:168px;height:0.9px;background:#4a4a4a;"></div>
<div class="a" style="left:658.2px;top:100.5px;width:121px;height:68.3px;background:#3a3a3a;border-left:1px solid #5c5c5c;border-bottom:1px solid #5c5c5c"></div>
<div class="a" style="left:659.2px;top:113.4px;width:120px;height:0.8px;background:#585858;"></div>
<div class="a" style="left:659.2px;top:128.2px;width:120px;height:0.8px;background:#585858;"></div>
<div class="a" style="left:659.2px;top:143.8px;width:120px;height:0.8px;background:#585858;"></div>
<div class="a" style="left:659.2px;top:159.4px;width:120px;height:0.8px;background:#585858;"></div>
<div class="a" style="left:658.2px;top:100.5px;width:121px;height:68.3px;overflow:hidden"><div class="a" style="left:-658.2px;top:-100.5px;width:820px;height:461px">
<div class="a" style="left:665px;top:103.1px;width:7px;height:7px;background:#dcdcdc;border-radius:0.6px"></div>
<div class="t" style="left:675.70px;top:102.30px;font-size:7.5px;color:#dedede;">budget</div>
<svg style="left:762px;top:104.39999999999999px" width="7" height="4.2" viewBox="0 0 7 4.2"><path d="M0.5 0.5L3.5 3.5 6.5 0.5" stroke="#e8e8e8" stroke-width="1.25" fill="none"/></svg>
</div></div>
<div class="a" style="left:658.2px;top:100.5px;width:121px;height:68.3px;overflow:hidden"><div class="a" style="left:-658.2px;top:-100.5px;width:820px;height:461px">
<div class="a" style="left:665px;top:118.7px;width:7px;height:7px;background:#dcdcdc;border-radius:0.6px"></div>
<div class="t" style="left:675.70px;top:117.90px;font-size:7.5px;color:#dedede;">deptCode</div>
<svg style="left:762px;top:120.0px" width="7" height="4.2" viewBox="0 0 7 4.2"><path d="M0.5 0.5L3.5 3.5 6.5 0.5" stroke="#e8e8e8" stroke-width="1.25" fill="none"/></svg>
</div></div>
<div class="a" style="left:658.2px;top:100.5px;width:121px;height:68.3px;overflow:hidden"><div class="a" style="left:-658.2px;top:-100.5px;width:820px;height:461px">
<div class="a" style="left:665px;top:134.3px;width:7px;height:7px;background:#dcdcdc;border-radius:0.6px"></div>
<div class="t" style="left:675.70px;top:133.50px;font-size:7.5px;color:#dedede;">deptId</div>
<svg style="left:762px;top:135.6px" width="7" height="4.2" viewBox="0 0 7 4.2"><path d="M0.5 0.5L3.5 3.5 6.5 0.5" stroke="#e8e8e8" stroke-width="1.25" fill="none"/></svg>
</div></div>
<div class="a" style="left:658.2px;top:100.5px;width:121px;height:68.3px;overflow:hidden"><div class="a" style="left:-658.2px;top:-100.5px;width:820px;height:461px">
<div class="a" style="left:665px;top:150.0px;width:7px;height:7px;background:#dcdcdc;border-radius:0.6px"></div>
<div class="t" style="left:675.70px;top:149.20px;font-size:7.5px;color:#dedede;">location</div>
<svg style="left:762px;top:151.29999999999998px" width="7" height="4.2" viewBox="0 0 7 4.2"><path d="M0.5 0.5L3.5 3.5 6.5 0.5" stroke="#e8e8e8" stroke-width="1.25" fill="none"/></svg>
</div></div>
<div class="a" style="left:658.2px;top:100.5px;width:121px;height:68.3px;overflow:hidden"><div class="a" style="left:-658.2px;top:-100.5px;width:820px;height:461px">
<div class="a" style="left:665px;top:165.60000000000002px;width:7px;height:7px;background:#dcdcdc;border-radius:0.6px"></div>
<div class="t" style="left:675.70px;top:164.80px;font-size:7.5px;color:#dedede;">name</div>
<svg style="left:762px;top:166.9px" width="7" height="4.2" viewBox="0 0 7 4.2"><path d="M0.5 0.5L3.5 3.5 6.5 0.5" stroke="#e8e8e8" stroke-width="1.25" fill="none"/></svg>
</div></div>
<div class="a" style="left:779.2px;top:100.5px;width:10.6px;height:68.3px;background:#f1f1f1;"></div>
<div class="a" style="left:781.2px;top:108px;width:7px;height:23px;background:#c1c1c1;"></div>
<svg style="left:782.7px;top:102.8px" width="4" height="3" viewBox="0 0 4 3"><path d="M0 3H4L2 0Z" fill="#a0a0a0"/></svg>
<svg style="left:782.7px;top:163.3px" width="4" height="3" viewBox="0 0 4 3"><path d="M0 0H4L2 3Z" fill="#333"/></svg>
<div class="a" style="left:652px;top:181.2px;width:168px;height:14.5px;background:#1b1b1b;"></div>
<div class="t" style="left:657.90px;top:184.20px;font-size:8.3px;color:#e8e8e8;letter-spacing:-0.476px;">X-Axis</div>
<div class="a" style="left:652.8px;top:199.2px;width:161px;height:156px;background:transparent;border:2px solid #f0861f"></div>
<div class="t" style="left:658.00px;top:203.90px;font-size:7.0px;color:#dcdcdc;letter-spacing:-0.276px;">x-axis</div>
<div class="a" style="left:657.9px;top:215.5px;width:133.1px;height:16.6px;background:#2b2b2b;border:1px solid #1b7fd8;border-radius:2px"></div>
<div class="t" style="left:664.50px;top:219.80px;font-size:7.2px;color:#fff;letter-spacing:-0.470px;">name</div>
<svg style="left:783.2px;top:222.3px" width="4.2" height="3.6" viewBox="0 0 4.2 3.6"><path d="M0 0H4.2L2.1 3.6Z" fill="#fff"/></svg>
<div class="a" style="left:654.8px;top:241.0px;width:157px;height:13.9px;background:#1b1b1b;"></div>
<div class="t" style="left:657.90px;top:243.10px;font-size:8.3px;color:#e8e8e8;letter-spacing:-0.424px;">Y-Axis</div>
<div class="t" style="left:658.00px;top:263.10px;font-size:7.0px;color:#dcdcdc;letter-spacing:-0.336px;">y-axis</div>
<div class="a" style="left:658.0px;top:275.0px;width:121px;height:71.6px;background:#3a3a3a;border-left:1px solid #5c5c5c;border-bottom:1px solid #5c5c5c;border-top:1px solid #5c5c5c"></div>
<div class="a" style="left:659.0px;top:290.3px;width:120px;height:0.8px;background:#585858;"></div>
<div class="a" style="left:659.0px;top:306.3px;width:120px;height:0.8px;background:#585858;"></div>
<div class="a" style="left:659.0px;top:322.2px;width:120px;height:0.8px;background:#585858;"></div>
<div class="a" style="left:659.0px;top:337.0px;width:120px;height:0.8px;background:#585858;"></div>
<div class="a" style="left:658.0px;top:275.0px;width:121px;height:71.6px;overflow:hidden"><div class="a" style="left:-658.0px;top:-275.0px;width:820px;height:461px">
<div class="a" style="left:665px;top:280.6px;width:7px;height:7px;background:#fff;border-radius:0.6px"></div>
<svg style="left:665.8px;top:281.5px" width="5.5" height="5.5" viewBox="0 0 5.5 5.5"><path d="M0.7 2.7L2.1 4.2 4.8 0.8" stroke="#111" stroke-width="1.3" fill="none"/></svg>
<div class="t" style="left:675.70px;top:279.80px;font-size:7.5px;color:#dedede;">budget</div>
</div></div>
<div class="a" style="left:658.0px;top:275.0px;width:121px;height:71.6px;overflow:hidden"><div class="a" style="left:-658.0px;top:-275.0px;width:820px;height:461px">
<div class="a" style="left:665px;top:296.0px;width:7px;height:7px;background:#dcdcdc;border-radius:0.6px"></div>
<div class="t" style="left:675.70px;top:295.20px;font-size:7.5px;color:#dedede;">deptId</div>
</div></div>
<div class="a" style="left:658.0px;top:275.0px;width:121px;height:71.6px;overflow:hidden"><div class="a" style="left:-658.0px;top:-275.0px;width:820px;height:461px">
<div class="a" style="left:665px;top:311.40000000000003px;width:7px;height:7px;background:#fff;border-radius:0.6px"></div>
<svg style="left:665.8px;top:312.3px" width="5.5" height="5.5" viewBox="0 0 5.5 5.5"><path d="M0.7 2.7L2.1 4.2 4.8 0.8" stroke="#111" stroke-width="1.3" fill="none"/></svg>
<div class="t" style="left:675.70px;top:310.60px;font-size:7.5px;color:#dedede;">q1</div>
</div></div>
<div class="a" style="left:658.0px;top:275.0px;width:121px;height:71.6px;overflow:hidden"><div class="a" style="left:-658.0px;top:-275.0px;width:820px;height:461px">
<div class="a" style="left:665px;top:327.0px;width:7px;height:7px;background:#fff;border-radius:0.6px"></div>
<svg style="left:665.8px;top:327.9px" width="5.5" height="5.5" viewBox="0 0 5.5 5.5"><path d="M0.7 2.7L2.1 4.2 4.8 0.8" stroke="#111" stroke-width="1.3" fill="none"/></svg>
<div class="t" style="left:675.70px;top:326.20px;font-size:7.5px;color:#dedede;">q2</div>
</div></div>
<div class="a" style="left:658.0px;top:275.0px;width:121px;height:71.6px;overflow:hidden"><div class="a" style="left:-658.0px;top:-275.0px;width:820px;height:461px">
<div class="a" style="left:665px;top:342.40000000000003px;width:7px;height:7px;background:#fff;border-radius:0.6px"></div>
<svg style="left:665.8px;top:343.3px" width="5.5" height="5.5" viewBox="0 0 5.5 5.5"><path d="M0.7 2.7L2.1 4.2 4.8 0.8" stroke="#111" stroke-width="1.3" fill="none"/></svg>
<div class="t" style="left:675.70px;top:341.60px;font-size:7.5px;color:#dedede;">q3</div>
</div></div>
<div class="a" style="left:779.0px;top:275.0px;width:10.6px;height:71.6px;background:#f1f1f1;"></div>
<div class="a" style="left:781.0px;top:285.8px;width:7px;height:31.80000000000001px;background:#c1c1c1;"></div>
<svg style="left:782.5px;top:277.3px" width="4" height="3" viewBox="0 0 4 3"><path d="M0 3H4L2 0Z" fill="#a0a0a0"/></svg>
<svg style="left:782.5px;top:341.1px" width="4" height="3" viewBox="0 0 4 3"><path d="M0 0H4L2 3Z" fill="#333"/></svg>
<div class="a" style="left:652px;top:358.0px;width:168px;height:14.7px;background:#1b1b1b;"></div>
<div class="t" style="left:658.00px;top:361.00px;font-size:8.4px;color:#e8e8e8;letter-spacing:-0.436px;">Behavior</div>
<div class="t" style="left:658.00px;top:382.00px;font-size:7.0px;color:#dcdcdc;letter-spacing:-0.470px;">Show</div>
<div class="a" style="left:701.8px;top:380.0px;width:22.9px;height:13.4px;background:#c9c9c9;border-radius:7px"></div>
<div class="a" style="left:711.4px;top:380.0px;width:13.4px;height:13.4px;background:#2196f3;border-radius:50%"></div>
<svg style="left:795.5px;top:381.8px" width="8" height="9" viewBox="0 0 8 9"><path d="M3.3 5.7L4.7 3.3M4.2 2.2L5.2 0.9C5.9 0.3 6.9 0.5 7.3 1.2 7.7 1.9 7.4 2.7 6.8 3.2L5.7 4.3M3.8 6.8L2.8 8C2.1 8.6 1.1 8.4 0.7 7.7 0.3 7 0.6 6.2 1.2 5.7L2.3 4.6" stroke="#d4d4d4" stroke-width="1.1" fill="none"/></svg>
<div class="a" style="left:652px;top:401.8px;width:168px;height:14.5px;background:#1b1b1b;"></div>
<div class="t" style="left:658.00px;top:405.20px;font-size:8.4px;color:#e8e8e8;letter-spacing:-0.430px;">Graphics</div>
<div class="t" style="left:658.00px;top:424.70px;font-size:7.0px;color:#dcdcdc;letter-spacing:0.227px;">Title Icon Class</div>
<div class="a" style="left:658.4px;top:436.3px;width:132.6px;height:16.1px;background:#2e2e2e;border:1px solid #555;border-radius:2px"></div>
<div class="a" style="left:676.5px;top:436.3px;width:0.9px;height:16.1px;background:#555;"></div>
<svg style="left:663.2px;top:441.6px" width="9" height="5" viewBox="0 0 9 5"><path d="M0.5 4.5L3.5 1.4 5.2 3.3 8.5 0.5" stroke="#e0e0e0" stroke-width="1" fill="none"/></svg>
<div class="t" style="left:683.70px;top:441.10px;font-size:7.0px;color:#fff;letter-spacing:-0.113px;">wi wi-line-chart</div>
<svg style="left:795.5px;top:439.8px" width="8" height="9" viewBox="0 0 8 9"><path d="M3.3 5.7L4.7 3.3M4.2 2.2L5.2 0.9C5.9 0.3 6.9 0.5 7.3 1.2 7.7 1.9 7.4 2.7 6.8 3.2L5.7 4.3M3.8 6.8L2.8 8C2.1 8.6 1.1 8.4 0.7 7.7 0.3 7 0.6 6.2 1.2 5.7L2.3 4.6" stroke="#d4d4d4" stroke-width="1.1" fill="none"/></svg>
</body></html>
